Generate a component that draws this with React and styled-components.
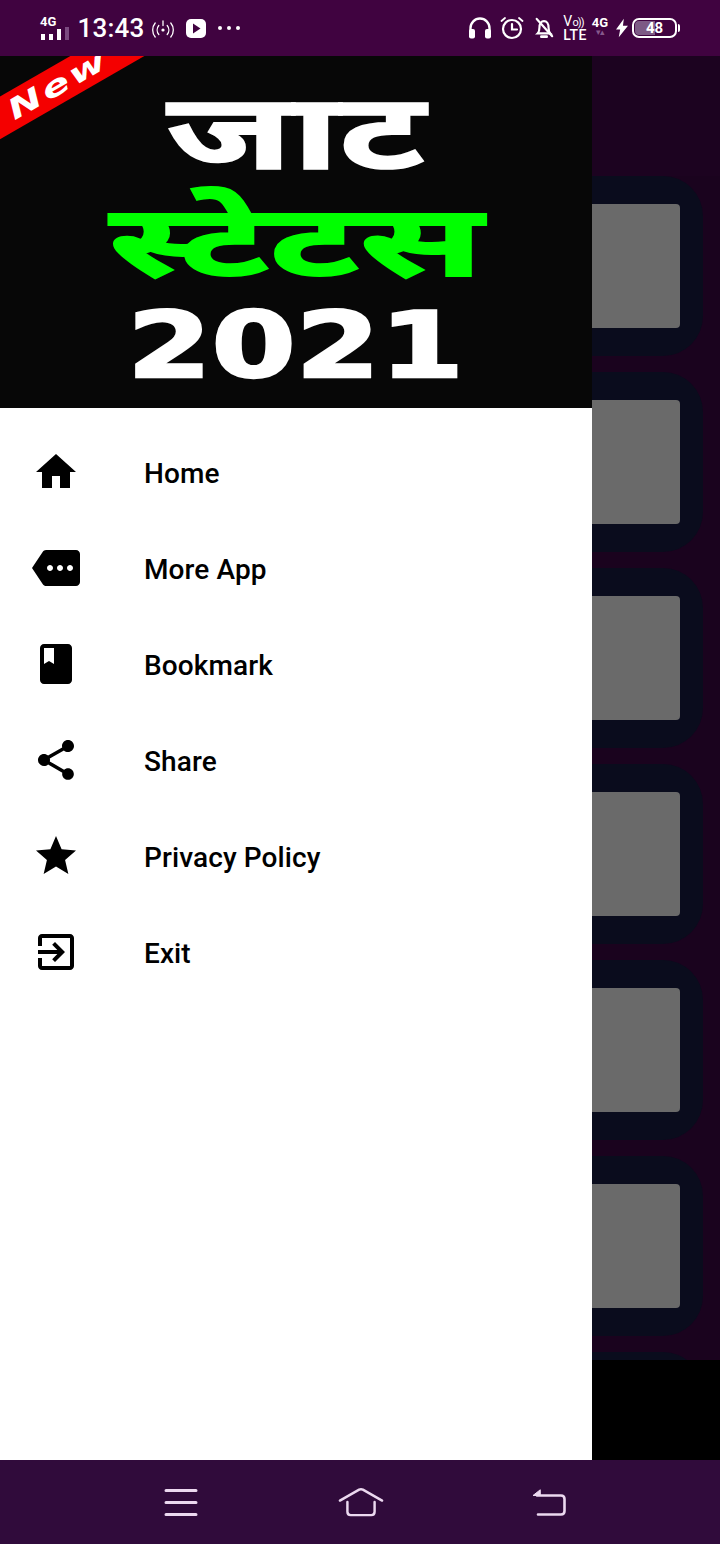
import React from "react";
import styled, { createGlobalStyle } from "styled-components";

const GlobalStyle = createGlobalStyle`
  html, body { margin: 0; padding: 0; background: #000; }
  * { box-sizing: border-box; }
`;

const menu = [
  { label: "Home", d: "M10 20v-6h4v6h5v-8h3L12 3 2 12h3v8z" },
  { label: "More App", d: "M22 3H7c-.69 0-1.23.35-1.59.88L0 12l5.41 8.11c.36.53.97.89 1.66.89H22c1.1 0 2-.9 2-2V5c0-1.1-.9-2-2-2zM9 13.5c-.83 0-1.5-.67-1.5-1.5s.67-1.5 1.5-1.5 1.5.67 1.5 1.5-.67 1.5-1.5 1.5zm5 0c-.83 0-1.5-.67-1.5-1.5s.67-1.5 1.5-1.5 1.5.67 1.5 1.5-.67 1.5-1.5 1.5zm5 0c-.83 0-1.5-.67-1.5-1.5s.67-1.5 1.5-1.5 1.5.67 1.5 1.5-.67 1.5-1.5 1.5z" },
  { label: "Bookmark", d: "M18 2H6c-1.1 0-2 .9-2 2v16c0 1.1.9 2 2 2h12c1.1 0 2-.9 2-2V4c0-1.1-.9-2-2-2zM6 4h5v8l-2.5-1.5L6 12V4z" },
  { label: "Share", d: "M18 16.08c-.76 0-1.44.3-1.96.77L8.91 12.7c.05-.23.09-.46.09-.7s-.04-.47-.09-.7l7.05-4.11c.54.5 1.25.81 2.04.81 1.66 0 3-1.34 3-3s-1.34-3-3-3-3 1.34-3 3c0 .24.04.47.09.7L8.04 9.81C7.5 9.31 6.79 9 6 9c-1.66 0-3 1.34-3 3s1.34 3 3 3c.79 0 1.5-.31 2.04-.81l7.12 4.16c-.05.21-.08.43-.08.65 0 1.61 1.31 2.92 2.92 2.92 1.61 0 2.92-1.31 2.92-2.92s-1.31-2.92-2.92-2.92z" },
  { label: "Privacy Policy", d: "M12 17.27L18.18 21l-1.64-7.03L22 9.24l-7.19-.61L12 2 9.19 8.63 2 9.24l5.46 4.73L5.82 21z" },
  { label: "Exit", d: "M10.09 15.59L11.5 17l5-5-5-5-1.41 1.41L12.67 11H3v2h9.67l-2.58 2.59zM19 3H5c-1.11 0-2 .9-2 2v4h2V5h14v14H5v-4H3v4c0 1.1.89 2 2 2h14c1.1 0 2-.9 2-2V5c0-1.1-.9-2-2-2z" },
];

export default function App() {
  return (
    <Screen>
      <GlobalStyle />
      <StatusBar>
        <StatusGroup>
          <Slot $w={29}>
            <Signal>
              <TinyLabel>4G</TinyLabel>
              <Bars>
                <Bar $h={6} />
                <Bar $h={6} />
                <Bar $h={11} />
                <Bar $h={13} $dim />
              </Bars>
            </Signal>
          </Slot>
          <Slot $w={66} $ml={9}>
            <Clock>13:43</Clock>
          </Slot>
          <Slot $w={22} $ml={8}>
            <svg width="22" height="24" viewBox="0 0 22 24" fill="none" stroke="#fff" strokeWidth="1.3" strokeLinecap="round">
              <circle cx="11" cy="14" r="1.6" fill="#fff" stroke="none" />
              <path d="M6.800 9.500a7 7 0 0 0 0 9M15.200 9.500a7 7 0 0 1 0 9M3.200 7a11 11 0 0 0 0 14M18.800 7a11 11 0 0 1 0 14M11 5v4.500" />
            </svg>
          </Slot>
          <Slot $w={20} $ml={12}>
            <svg width="20" height="19" viewBox="0 0 20 19">
              <rect width="20" height="19" rx="5" fill="#fff" />
              <path d="M7 4.500l7.500 5-7.500 5z" fill="#400340" />
            </svg>
          </Slot>
          <Slot $w={22} $ml={12}>
            <Dots>
              <i />
              <i />
              <i />
            </Dots>
          </Slot>
        </StatusGroup>
        <StatusGroup>
          <Slot $w={24}>
            <svg width="24" height="22" viewBox="0 0 24 22" fill="none">
              <path d="M2.500 14V11a9.500 9.500 0 0 1 19 0v3" stroke="#fff" strokeWidth="2.400" />
              <rect x="1" y="12" width="6" height="9.500" rx="2" fill="#fff" />
              <rect x="17" y="12" width="6" height="9.500" rx="2" fill="#fff" />
            </svg>
          </Slot>
          <Slot $w={24} $ml={8}>
            <svg width="24" height="24" viewBox="0 0 24 24" fill="none" stroke="#fff" strokeWidth="2.200" strokeLinecap="round">
              <circle cx="12" cy="13" r="9" />
              <path d="M12 8v5.500h5" />
              <path d="M1.500 5L5 2M22.500 5L19 2" strokeWidth="1.800" />
            </svg>
          </Slot>
          <Slot $w={20} $ml={10}>
            <svg width="22" height="24" viewBox="0 0 22 24" fill="none" stroke="#fff" strokeWidth="2.400" strokeLinecap="round">
              <path d="M4 18c1.500-1.500 2-3.500 2-6.500 0-4 2-7 5-7s5 3 5 7c0 3 .5 5 2 6.500z" />
              <path d="M8 21.500h6" strokeWidth="2.800" />
              <path d="M3 2l17 19" />
            </svg>
          </Slot>
          <Slot $w={24} $ml={9}>
            <Volte>
              <VolteTop>V<small>o))</small></VolteTop>
              <span>LTE</span>
            </Volte>
          </Slot>
          <Slot $w={16} $ml={5}>
            <NetType>
              <TinyLabel>4G</TinyLabel>
              <Arrows>▾▴</Arrows>
            </NetType>
          </Slot>
          <Slot $w={12} $ml={8}>
            <svg width="13" height="20" viewBox="0 0 13 20">
              <path d="M8.500 0L0 11.500h4.500L3 20l10-12.500H7.500z" fill="#fff" />
            </svg>
          </Slot>
          <Slot $w={48} $ml={4}>
            <Battery>
              <BatteryFill $level={48} />
              <BatteryText>48</BatteryText>
              <BatteryCap />
            </Battery>
          </Slot>
        </StatusGroup>
      </StatusBar>

      <Body>
        <Feed>
          <Toolbar />
          <CardList>
            {[0, 1, 2, 3, 4, 5, 6].map((i) => (
              <Card key={i}>
                <Thumb />
              </Card>
            ))}
          </CardList>
          <AdStrip />
        </Feed>

        <Drawer>
          <Banner>
            <Ribbon>
              <RibbonText>New</RibbonText>
            </Ribbon>
            <TitleLine>जाट</TitleLine>
            <TitleLine $green>स्टेटस</TitleLine>
            <Year>2021</Year>
          </Banner>
          <Menu>
            {menu.map((item) => (
              <MenuItem key={item.label}>
                <MenuIcon width="48" height="48" viewBox="0 0 24 24" fill="#000">
                  <path d={item.d} />
                </MenuIcon>
                <MenuLabel>{item.label}</MenuLabel>
              </MenuItem>
            ))}
          </Menu>
        </Drawer>
      </Body>

      <NavBar>
        <NavIcon width="34" height="28" viewBox="0 0 34 28" stroke="#ecd9f0" strokeWidth="3" strokeLinecap="round">
          <path d="M2 2.500h30M2 14.500h30M2 26.500h30" />
        </NavIcon>
        <NavIcon $ml={139} width="48" height="30" viewBox="0 0 48 32" fill="none" stroke="#ecd9f0" strokeWidth="2.600" strokeLinecap="round" strokeLinejoin="round">
          <path d="M1.500 14.500L22 2.800q2-1 4 0L46.500 14.500" />
          <path d="M9.500 16v10.500q0 3.500 3.500 3.500h22q3.500 0 3.500-3.500V16" />
        </NavIcon>
        <NavIcon $ml={147} width="34" height="28" viewBox="0 0 34 28" fill="none" stroke="#ecd9f0" strokeWidth="2.600" strokeLinecap="round" strokeLinejoin="round">
          <path d="M6 26.500h23q3.500 0 3.500-3.500v-12q0-3.500-3.500-3.500H5" />
          <path d="M8 2L1 7.500h7z" fill="#ecd9f0" strokeWidth="1" />
        </NavIcon>
      </NavBar>
    </Screen>
  );
}

const Screen = styled.div`
  width: 720px;
  height: 1544px;
  display: flex;
  flex-direction: column;
  overflow: hidden;
  font-family: Roboto, "Liberation Sans", sans-serif;
`;

const StatusBar = styled.div`
  height: 56px;
  flex: none;
  background: #400340;
  color: #fff;
  display: flex;
  align-items: center;
  justify-content: space-between;
  padding: 0 40px;
`;

const StatusGroup = styled.div`
  display: flex;
  align-items: center;
`;

const Slot = styled.span`
  flex: none;
  width: ${(p) => p.$w}px;
  margin-left: ${(p) => p.$ml || 0}px;
  display: flex;
  align-items: center;
  justify-content: center;
`;

const Signal = styled.div`
  width: 100%;
  display: flex;
  flex-direction: column;
  margin-top: -1px;
`;

const TinyLabel = styled.span`
  font-size: 13px;
  line-height: 11px;
  font-weight: 700;
`;

const Bars = styled.div`
  height: 13px;
  display: flex;
  align-items: flex-end;
  gap: 4px;
  padding-left: 1px;
`;

const Bar = styled.span`
  width: 4px;
  height: ${(p) => p.$h}px;
  background: ${(p) => (p.$dim ? "#7b4a80" : "#fff")};
`;

const Clock = styled.span`
  font-size: 26px;
  font-weight: 500;
  line-height: 32px;
  letter-spacing: 0.2px;
`;

const Dots = styled.span`
  display: flex;
  gap: 5px;
  i {
    width: 4px;
    height: 4px;
    border-radius: 50%;
    background: #fff;
  }
`;

const Volte = styled.div`
  font-size: 14px;
  line-height: 12px;
  font-weight: 500;
  letter-spacing: 0.4px;
  display: flex;
  flex-direction: column;
`;

const VolteTop = styled.span`
  font-weight: 400;
  small {
    font-size: 11px;
    letter-spacing: -1px;
  }
`;

const NetType = styled.div`
  display: flex;
  flex-direction: column;
  align-items: center;
  margin-top: -4px;
`;

const Arrows = styled.span`
  font-size: 9px;
  line-height: 8px;
  color: #86588c;
  letter-spacing: -1px;
`;

const Battery = styled.div`
  position: relative;
  width: 45px;
  height: 20px;
  margin-right: 3px;
  border: 2px solid #fff;
  border-radius: 7px;
  display: flex;
  align-items: center;
  justify-content: center;
`;

const BatteryFill = styled.span`
  position: absolute;
  left: 1px;
  top: 1px;
  bottom: 1px;
  width: ${(p) => p.$level}%;
  background: #7d5a85;
  border-radius: 4px 0 0 4px;
`;

const BatteryText = styled.span`
  position: relative;
  font-size: 15px;
  line-height: 16px;
  font-weight: 700;
`;

const BatteryCap = styled.span`
  position: absolute;
  right: -5px;
  top: 4px;
  width: 2px;
  height: 8px;
  background: #fff;
  border-radius: 0 2px 2px 0;
`;

const Body = styled.div`
  position: relative;
  flex: 1;
  min-height: 0;
  overflow: hidden;
`;

const Feed = styled.div`
  height: 100%;
  display: flex;
  flex-direction: column;
  background: #1a031e;
`;

const Toolbar = styled.div`
  height: 120px;
  flex: none;
  background: #1c0320;
`;

const CardList = styled.div`
  flex: 1;
  min-height: 0;
  overflow: hidden;
  display: flex;
  flex-direction: column;
  gap: 16px;
  padding-right: 17px;
`;

const Card = styled.div`
  height: 180px;
  flex: none;
  background: #0a0c1d;
  border-radius: 0 40px 40px 0;
  padding: 28px 23px;
`;

const Thumb = styled.div`
  height: 124px;
  background: #6a6a6a;
  border-radius: 4px;
`;

const AdStrip = styled.div`
  height: 100px;
  flex: none;
  background: #000;
`;

const Drawer = styled.aside`
  position: absolute;
  left: 0;
  top: 0;
  bottom: 0;
  width: 592px;
  background: #fff;
`;

const Banner = styled.div`
  position: relative;
  height: 352px;
  padding-top: 38px;
  background: #070707;
  overflow: hidden;
  display: flex;
  flex-direction: column;
  align-items: center;
  font-family: "Noto Sans Devanagari", "DejaVu Sans", sans-serif;
`;

const Ribbon = styled.div`
  position: absolute;
  left: -62px;
  top: 10px;
  width: 240px;
  height: 37px;
  background: #f40000;
  transform: rotate(-30deg);
  display: flex;
  align-items: center;
  justify-content: center;
`;

const RibbonText = styled.span`
  font-family: "DejaVu Sans", sans-serif;
  font-style: italic;
  font-weight: 700;
  font-size: 28px;
  line-height: 36px;
  letter-spacing: 2px;
  color: #fff;
  transform: scaleX(1.5);
`;

const TitleLine = styled.div`
  flex: none;
  height: 100px;
  margin-top: ${(p) => (p.$green ? "7px" : "0")};
  font-weight: 700;
  font-size: ${(p) => (p.$green ? "110px" : "100px")};
  line-height: 100px;
  color: ${(p) => (p.$green ? "#00ff00" : "#fff")};
  -webkit-text-stroke: ${(p) => (p.$green ? "2px #00ff00" : "1.5px #fff")};
  transform: ${(p) => (p.$green ? "scale(1.52, 0.91)" : "scale(1.6, 1.06)")};
`;

const Year = styled.div`
  flex: none;
  height: 80px;
  margin-top: 5px;
  font-family: "DejaVu Sans", sans-serif;
  font-weight: 700;
  font-size: 91px;
  line-height: 80px;
  color: #fff;
  -webkit-text-stroke: 2.5px #fff;
  transform: scaleX(1.33);
`;

const Menu = styled.nav`
  padding: 17px 0 0 32px;
  display: flex;
  flex-direction: column;
`;

const MenuItem = styled.div`
  height: 96px;
  display: flex;
  align-items: center;
  gap: 64px;
`;

const MenuIcon = styled.svg`
  flex: none;
  margin-bottom: 2px;
`;

const MenuLabel = styled.span`
  font-size: 28px;
  font-weight: 500;
  letter-spacing: 0.1px;
  color: #000;
`;

const NavBar = styled.div`
  height: 84px;
  flex: none;
  background: #300b3b;
  display: flex;
  align-items: center;
  padding-left: 164px;
`;

const NavIcon = styled.svg`
  flex: none;
  margin-left: ${(p) => p.$ml || 0}px;
`;
